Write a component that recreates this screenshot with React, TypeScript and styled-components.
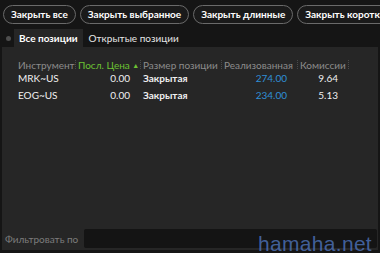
import styled, { createGlobalStyle } from "styled-components";

const GlobalStyle = createGlobalStyle`
    html, body {
        margin: 0;
        padding: 0;
        background: #151515;
        font-family: Lato, "Noto Sans", sans-serif;
    }
`

type Row = {
    symbol: string;
    last: string;
    size: string;
    realized: string;
    fee: string;
};

const rows: Row[] = [
    {symbol: "MRK~US", last: "0.00", size: "Закрытая", realized: "274.00", fee: "9.64"},
    {symbol: "EOG~US", last: "0.00", size: "Закрытая", realized: "234.00", fee: "5.13"},
];

const buttons = ["Закрыть все", "Закрыть выбранное", "Закрыть длинные", "Закрыть короткие"];

export default function App() {
    return (
        <Screen>
            <GlobalStyle/>
            <Toolbar>
                {buttons.map((b) => (
                    <PillButton key={b}>{b}</PillButton>
                ))}
            </Toolbar>
            <Tabs>
                <Dot/>
                <Tab $active>Все позиции</Tab>
                <Tab>Открытые позиции</Tab>
            </Tabs>
            <Panel>
                <Table>
                    <Head>Инструмент</Head>
                    <Sep/>
                    <Head $sorted>Посл. Цена <Arrow>▲</Arrow></Head>
                    <Sep/>
                    <Head>Размер позиции</Head>
                    <Sep/>
                    <Head>Реализованная</Head>
                    <Sep/>
                    <Head>Комиссии</Head>
                    <Sep/>
                    {rows.map((r) => (
                        <DataRow key={r.symbol}>
                            <Cell>{r.symbol}</Cell>
                            <Gap/>
                            <Cell $right>{r.last}</Cell>
                            <Gap/>
                            <Cell $bold>{r.size}</Cell>
                            <Gap/>
                            <Cell $right $blue>{r.realized}</Cell>
                            <Gap/>
                            <Cell $right>{r.fee}</Cell>
                            <Gap/>
                        </DataRow>
                    ))}
                </Table>
                <Spacer/>
                <FilterBar>
                    <FilterLabel>Фильтровать по</FilterLabel>
                    <FilterInput/>
                </FilterBar>
            </Panel>
            <Watermark>hamaha.net</Watermark>
        </Screen>
    );
}

const Screen = styled.div`
    position: relative;
    width: 380px;
    height: 253px;
    overflow: hidden;
    background: #151515;
    display: flex;
    flex-direction: column;
`
const Toolbar = styled.div`
    display: flex;
    gap: 4px;
    padding: 5px 0 0 3px;
    white-space: nowrap;
`
const PillButton = styled.button`
    flex-shrink: 0;
    height: 19px;
    padding: 0 7px;
    border: 1px solid #6a6a6a;
    border-radius: 10px;
    background: #1a1a1a;
    color: #ffffff;
    font-family: Lato, "Noto Sans", sans-serif;
    font-size: 10px;
    font-weight: 700;
    line-height: 17px;
`
const Tabs = styled.div`
    display: flex;
    align-items: stretch;
    height: 18px;
    margin-top: 5px;
    padding-left: 6px;
`
const Dot = styled.span`
    align-self: center;
    width: 5px;
    height: 5px;
    border-radius: 50%;
    background: #4e4e4e;
    margin-right: 3px;
`
const Tab = styled.div<{ $active?: boolean }>`
    padding: 0 ${(p) => (p.$active ? "5px" : "6px")};
    background: ${(p) => (p.$active ? "#262626" : "transparent")};
    color: ${(p) => (p.$active ? "#ffffff" : "#e6e6e6")};
    font-size: 10px;
    font-weight: ${(p) => (p.$active ? 700 : 400)};
    line-height: 18px;
`
const Panel = styled.div`
    flex: 1;
    margin: 0 2px 3px 2px;
    background: #262626;
    display: flex;
    flex-direction: column;
`
const Table = styled.div`
    display: grid;
    grid-template-columns: 55px 5px 60px 5px 76px 5px 71px 5px 46px 5px;
    grid-auto-rows: 17px;
    grid-template-rows: 10px;
    padding: 13px 0 0 16px;
    font-size: 10px;
`
const DataRow = styled.div`
    display: contents;
`
const Head = styled.div<{ $sorted?: boolean }>`
    line-height: 10px;
    white-space: nowrap;
    color: ${(p) => (p.$sorted ? "#6cc133" : "#8c8c8c")};
`
const Arrow = styled.span`
    font-size: 7px;
    vertical-align: 1px;
`
const Sep = styled.div`
    display: flex;
    align-items: center;
    justify-content: center;

    &::before {
        content: "";
        width: 1px;
        height: 10px;
        background: repeating-linear-gradient(#4a4a4a 0 1px, transparent 1px 2px);
    }
`
const Gap = styled.span``
const Cell = styled.div<{ $right?: boolean; $bold?: boolean; $blue?: boolean }>`
    line-height: 17px;
    white-space: nowrap;
    padding-right: ${(p) => (p.$right ? "8px" : "0")};
    text-align: ${(p) => (p.$right ? "right" : "left")};
    color: ${(p) => (p.$blue ? "#2f8fd6" : "#f0f0f0")};
    font-weight: ${(p) => (p.$bold ? 700 : 400)};
`
const Spacer = styled.div`
    flex: 1;
`
const FilterBar = styled.div`
    display: flex;
    align-items: center;
    gap: 6px;
    padding: 0 1px 2px 3px;
`
const FilterLabel = styled.span`
    color: #7c7c7c;
    font-size: 10px;
    white-space: nowrap;
`
const FilterInput = styled.div`
    flex: 1;
    height: 19px;
    background: #141414;
    border-radius: 2px;
`
const Watermark = styled.div`
    position: absolute;
    right: 8px;
    bottom: -3px;
    color: rgba(78, 116, 190, 0.8);
    font-family: "Liberation Sans", sans-serif;
    font-size: 21px;
    letter-spacing: 0.3px;
`
